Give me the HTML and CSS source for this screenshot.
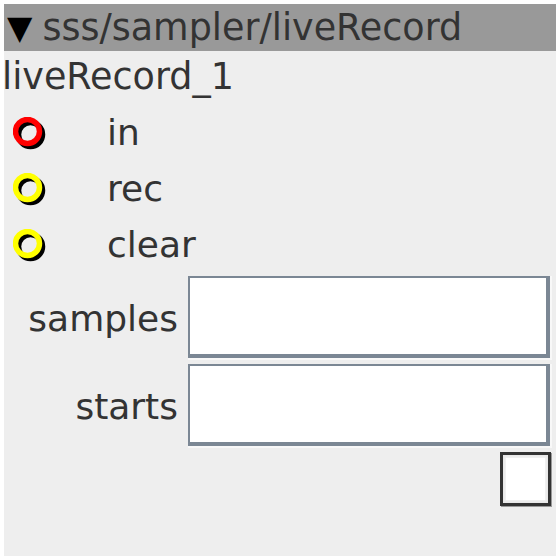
FILE: index.html
```html
<!DOCTYPE html>
<html>
<head>
<meta charset="utf-8">
<link rel="stylesheet" href="styles.css">
</head>
<body>
<div class="panel">
  <div class="header"><span class="tri">▼</span><span class="path">sss/sampler/liveRecord</span></div>
  <div class="title">liveRecord_1</div>
  <div class="ports">
    <div class="port">
      <svg class="jack" viewBox="0 0 36 36" width="36" height="36"><circle cx="17.5" cy="17.5" r="12" fill="none" stroke="#000" stroke-width="5.5"/><circle cx="14.5" cy="14.5" r="12" fill="none" stroke="#ff0000" stroke-width="5.5"/></svg>
      <span class="plabel">in</span>
    </div>
    <div class="port">
      <svg class="jack" viewBox="0 0 36 36" width="36" height="36"><circle cx="17.5" cy="17.5" r="12" fill="none" stroke="#000" stroke-width="5.5"/><circle cx="14.5" cy="14.5" r="12" fill="none" stroke="#ffff00" stroke-width="5.5"/></svg>
      <span class="plabel">rec</span>
    </div>
    <div class="port">
      <svg class="jack" viewBox="0 0 36 36" width="36" height="36"><circle cx="17.5" cy="17.5" r="12" fill="none" stroke="#000" stroke-width="5.5"/><circle cx="14.5" cy="14.5" r="12" fill="none" stroke="#ffff00" stroke-width="5.5"/></svg>
      <span class="plabel">clear</span>
    </div>
  </div>
  <div class="fields">
    <label class="flabel">samples</label>
    <div class="bevel"><div class="field"></div></div>
    <label class="flabel">starts</label>
    <div class="bevel"><div class="field"></div></div>
  </div>
  <div class="checkrow">
    <div class="check"><div class="check-inner"></div></div>
  </div>
</div>
</body>
</html>
```
FILE: styles.css
```css
html, body {
  margin: 0;
  padding: 0;
  background: #ffffff;
}
body {
  font-family: "DejaVu Sans", sans-serif;
  color: #333333;
}
.panel {
  margin: 4px;
  width: 552px;
  height: 552px;
  background: #eeeeee;
  display: flex;
  flex-direction: column;
}
.header {
  height: 47px;
  background: #999999;
  display: flex;
  align-items: center;
  font-size: 36.5px;
  color: #333333;
  padding-left: 3px;
  box-sizing: border-box;
}
.tri {
  color: #000000;
  font-size: 33px;
  margin-right: 10px;
}
.title {
  height: 53px;
  line-height: 52px;
  font-size: 36.5px;
  margin-left: -2px;
}
.ports {
  display: flex;
  flex-direction: column;
}
.port {
  height: 56px;
  display: flex;
  align-items: center;
}
.jack {
  margin-left: 9px;
  margin-top: 5px;
  width: 36px;
  height: 36px;
}
.plabel {
  margin-left: 58px;
  font-size: 36px;
}
.fields {
  margin-top: 4px;
  display: grid;
  grid-template-columns: 176px 364px;
  column-gap: 8px;
  row-gap: 4px;
  align-items: center;
}
.flabel {
  text-align: right;
  font-size: 36px;
  margin-right: 2px;
}
.bevel {
  border-style: solid;
  border-width: 0 2px 2px 0;
  border-color: #eeeeee #f8f8f8 #f8f8f8 #eeeeee;
  width: 364px;
  box-sizing: border-box;
}
.field {
  height: 82px;
  box-sizing: border-box;
  background: #ffffff;
  border-style: solid;
  border-color: #7b8794;
  border-width: 2px 4px 4px 2px;
}
.checkrow {
  display: flex;
  justify-content: flex-end;
  padding-right: 5px;
  padding-top: 4px;
}
.check {
  width: 51px;
  height: 54px;
  box-sizing: border-box;
  border: 3px solid #333333;
  box-shadow: 1px 1px 0 #999999;
  background: #e8e8e8;
  padding: 3px;
}
.check-inner {
  width: 100%;
  height: 100%;
  background: #ffffff;
  box-shadow: 0 0 2px 1px #f4f4f4;
}
```
